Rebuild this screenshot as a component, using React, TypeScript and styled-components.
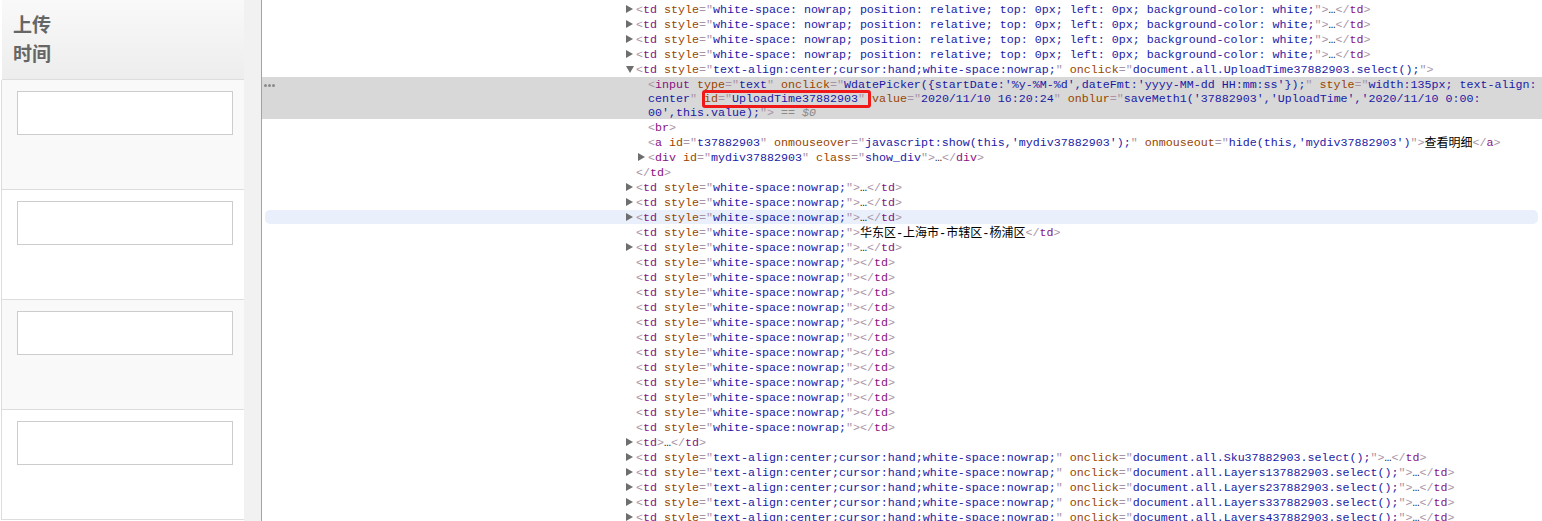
import React from "react";
import styled, { createGlobalStyle } from "styled-components";

const GlobalStyle = createGlobalStyle`
  html, body {
    margin: 0;
    padding: 0;
    height: 521px;
    overflow: hidden;
    background: #fff;
  }
`;

type Attr = [string, string];

const NOWRAP = "white-space:nowrap;";
const HAND = "text-align:center;cursor:hand;white-space:nowrap;";
const REL = "white-space: nowrap; position: relative; top: 0px; left: 0px; background-color: white;";

const AttrList = ({ attrs }: { attrs: Attr[] }) => (
  <>
    {attrs.map(([name, value]) => (
      <React.Fragment key={name}>
        {" "}
        <AttrName>{name}</AttrName>
        <Punct>="</Punct>
        <AttrValue>{value}</AttrValue>
        <Punct>"</Punct>
      </React.Fragment>
    ))}
  </>
);

const Open = ({ name, attrs = [] }: { name: string; attrs?: Attr[] }) => (
  <>
    <Punct>&lt;</Punct>
    <TagName>{name}</TagName>
    <AttrList attrs={attrs} />
    <Punct>&gt;</Punct>
  </>
);

const Close = ({ name }: { name: string }) => (
  <>
    <Punct>&lt;/</Punct>
    <TagName>{name}</TagName>
    <Punct>&gt;</Punct>
  </>
);

const Td = ({ attrs = [], children }: { attrs?: Attr[]; children?: React.ReactNode }) => (
  <>
    <Open name="td" attrs={attrs} />
    {children}
    <Close name="td" />
  </>
);

const Header = () => (
  <Heading>
    上传
    <br />
    时间
  </Heading>
);

const SelectedNode = () => (
  <Selected>
    <Dots>
      <i />
      <i />
      <i />
    </Dots>
    <WrappedLine>
      <Punct>&lt;</Punct>
      <TagName>input</TagName>
      <AttrList
        attrs={[
          ["type", "text"],
          ["onclick", "WdatePicker({startDate:'%y-%M-%d',dateFmt:'yyyy-MM-dd HH:mm:ss'});"],
        ]}
      />{" "}
      <AttrName>style</AttrName>
      <Punct>="</Punct>
      <AttrValue>width:135px; text-align:</AttrValue>
    </WrappedLine>
    <WrappedLine>
      <AttrValue>center</AttrValue>
      <Punct>"</Punct>{" "}
      <Marked>
        <AttrName>id</AttrName>
        <Punct>="</Punct>
        <AttrValue>UploadTime37882903</AttrValue>
        <Punct>"</Punct>
      </Marked>{" "}
      <AttrName>value</AttrName>
      <Punct>="</Punct>
      <AttrValue>2020/11/10 16:20:24</AttrValue>
      <Punct>"</Punct> <AttrName>onblur</AttrName>
      <Punct>="</Punct>
      <AttrValue>saveMeth1('37882903','UploadTime','2020/11/10 0:00:</AttrValue>
    </WrappedLine>
    <WrappedLine>
      <AttrValue>00',this.value);</AttrValue>
      <Punct>"&gt;</Punct> <Console>== <em>$0</em></Console>
    </WrappedLine>
  </Selected>
);

export default function App() {
  const rows = [true, false, true, false];
  const emptyCells = Array.from({ length: 12 }, (_, i) => i);

  return (
    <>
      <GlobalStyle />
      <Page>
        <TablePane>
          <Column>
            <Header />
            {rows.map((striped, i) => (
              <Cell key={i} striped={striped}>
                <TimeInput type="text" readOnly />
              </Cell>
            ))}
          </Column>
          <Track />
        </TablePane>
        <Elements>
          {[0, 1, 2, 3].map((i) => (
            <Line key={i}>
              <RightArrow />
              <Td attrs={[["style", REL]]}>…</Td>
            </Line>
          ))}
          <Line>
            <DownArrow />
            <Punct>&lt;</Punct>
            <TagName>td</TagName>
            <AttrList
              attrs={[
                ["style", HAND],
                ["onclick", "document.all.UploadTime37882903.select();"],
              ]}
            />
            <Punct>&gt;</Punct>
          </Line>
          <SelectedNode />
          <Line depth={1}>
            <Open name="br" />
          </Line>
          <Line depth={1}>
            <Open
              name="a"
              attrs={[
                ["id", "t37882903"],
                ["onmouseover", "javascript:show(this,'mydiv37882903');"],
                ["onmouseout", "hide(this,'mydiv37882903')"],
              ]}
            />
            <Cjk>查看明细</Cjk>
            <Close name="a" />
          </Line>
          <Line depth={1}>
            <RightArrow />
            <Open
              name="div"
              attrs={[
                ["id", "mydiv37882903"],
                ["class", "show_div"],
              ]}
            />
            …
            <Close name="div" />
          </Line>
          <Line>
            <Close name="td" />
          </Line>
          <Line>
            <RightArrow />
            <Td attrs={[["style", NOWRAP]]}>…</Td>
          </Line>
          <Line>
            <RightArrow />
            <Td attrs={[["style", NOWRAP]]}>…</Td>
          </Line>
          <HoveredLine>
            <RightArrow />
            <Td attrs={[["style", NOWRAP]]}>…</Td>
          </HoveredLine>
          <Line>
            <Td attrs={[["style", NOWRAP]]}>
              <Cjk>华东区-上海市-市辖区-杨浦区</Cjk>
            </Td>
          </Line>
          <Line>
            <RightArrow />
            <Td attrs={[["style", NOWRAP]]}>…</Td>
          </Line>
          {emptyCells.map((i) => (
            <Line key={i}>
              <Td attrs={[["style", NOWRAP]]} />
            </Line>
          ))}
          <Line>
            <RightArrow />
            <Td>…</Td>
          </Line>
          {["Sku37882903", "Layers137882903", "Layers237882903", "Layers337882903", "Layers437882903"].map((id) => (
            <Line key={id}>
              <RightArrow />
              <Td
                attrs={[
                  ["style", HAND],
                  ["onclick", `document.all.${id}.select();`],
                ]}
              >
                …
              </Td>
            </Line>
          ))}
        </Elements>
      </Page>
    </>
  );
}

const Page = styled.div`
  display: flex;
  width: 1542px;
  height: 521px;
  overflow: hidden;
`;

const TablePane = styled.div`
  display: flex;
  flex: none;
  width: 261px;
  border-right: 1px solid #a3a3a3;
`;

const Column = styled.div`
  width: 244px;
  flex: none;
`;

const Track = styled.div`
  flex: 1;
  background: #f1f1f1;
`;

const Heading = styled.div`
  box-sizing: border-box;
  height: 80px;
  padding: 11px 0 0 11px;
  margin-left: 2px;
  border-bottom: 1px solid #ddd;
  background: linear-gradient(#f9f9f9, #ededed);
  color: #666;
  font: bold 19px/29px "Liberation Sans", "Noto Sans CJK SC", sans-serif;
`;

const Cell = styled.div<{ striped: boolean }>`
  box-sizing: border-box;
  height: 110px;
  padding: 11px 0 0 15px;
  margin-left: 1px;
  border-left: 1px solid #ddd;
  border-bottom: 1px solid #ddd;
  background: ${({ striped }) => (striped ? "#f9f9f9" : "#fff")};
`;

const TimeInput = styled.input`
  display: block;
  box-sizing: border-box;
  width: 216px;
  height: 44px;
  margin: 0;
  padding: 0;
  border: 1px solid #ccc;
  outline: none;
  background: #fff;
`;

const Elements = styled.div`
  flex: 1;
  min-width: 0;
  padding-top: 2px;
  color: #222;
  font: 11.67px/17px "Liberation Mono", monospace;
  white-space: pre;
`;

const Line = styled.div<{ depth?: number }>`
  height: 15px;
  padding-left: ${({ depth = 0 }) => 374 + depth * 12}px;
`;

const HoveredLine = styled(Line)`
  height: 14px;
  margin: 0 4px 1px 3px;
  padding-left: 371px;
  border-radius: 5px;
  background: #e9f0fb;
  line-height: 16px;
`;

const Selected = styled.div`
  position: relative;
  margin-bottom: 1px;
  background: #d8d8d8;
`;

const WrappedLine = styled.div`
  height: 14px;
  padding-left: 386px;
  line-height: 16px;
`;

const Dots = styled.span`
  position: absolute;
  top: 7px;
  left: 2px;
  display: flex;
  gap: 1px;

  i {
    width: 3px;
    height: 3px;
    border-radius: 50%;
    background: #8a8a8a;
  }
`;

const Punct = styled.span`
  color: #a894a6;
`;

const TagName = styled.span`
  color: #881280;
`;

const AttrName = styled.span`
  color: #994500;
`;

const AttrValue = styled.span`
  color: #1a1aa6;
`;

const Console = styled.span`
  color: #8a8a8a;
`;

const Cjk = styled.span`
  color: #000;
  font-family: "Liberation Mono", "Noto Sans CJK SC", monospace;
  font-size: 12px;
  vertical-align: -1px;
`;

const Marked = styled.span`
  position: relative;

  &::after {
    content: "";
    position: absolute;
    top: -2px;
    right: -6px;
    bottom: -2px;
    left: -2px;
    border: 3px solid #f01818;
    border-radius: 3px;
  }
`;

const RightArrow = styled.span`
  display: inline-block;
  width: 0;
  height: 0;
  margin-left: -10px;
  margin-right: 3px;
  border-style: solid;
  border-width: 4px 0 4px 7px;
  border-color: transparent transparent transparent #6e6e6e;
`;

const DownArrow = styled.span`
  display: inline-block;
  width: 0;
  height: 0;
  margin-left: -10px;
  margin-right: 2px;
  border-style: solid;
  border-width: 7px 4px 0;
  border-color: #6e6e6e transparent transparent;
`;
